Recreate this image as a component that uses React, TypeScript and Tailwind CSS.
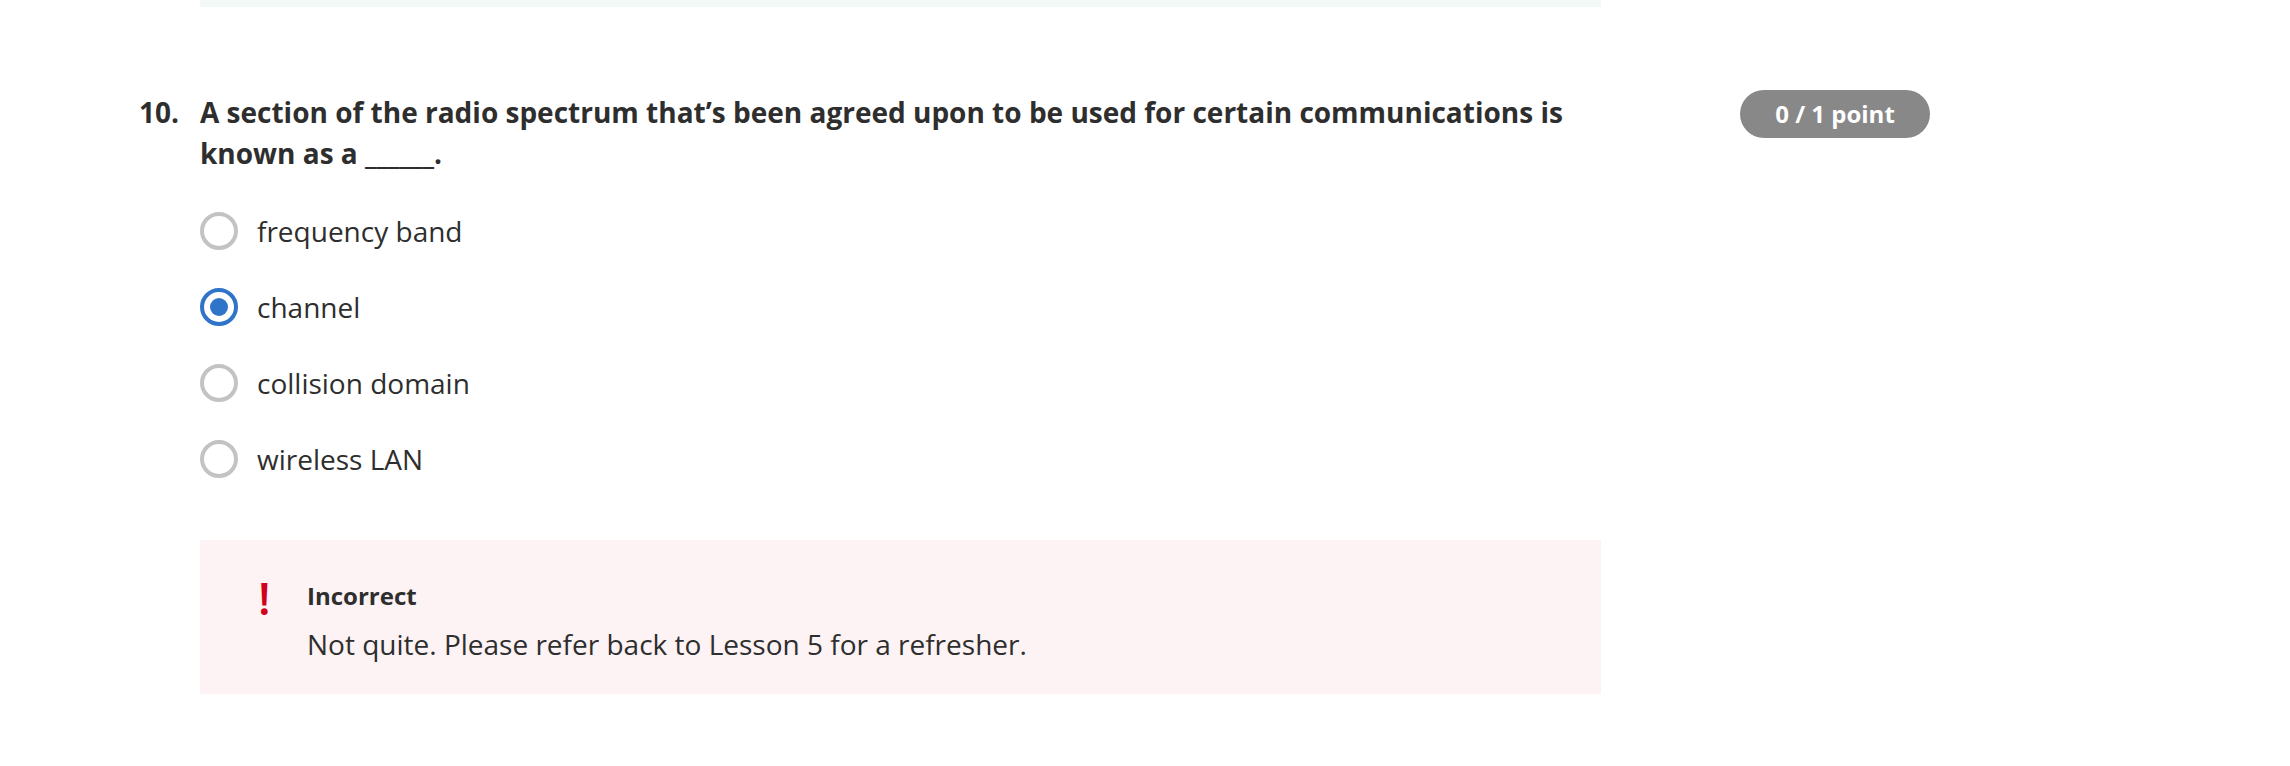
const OPTIONS = ["frequency band", "channel", "collision domain", "wireless LAN"];
const SELECTED = 1;

function Radio({ checked }: { checked: boolean }) {
  return (
    <span
      className={
        checked
          ? "grid h-[38px] w-[38px] shrink-0 place-items-center rounded-full border-[4px] border-[#2f74c9]"
          : "h-[38px] w-[38px] shrink-0 rounded-full border-[4px] border-[#c3c3c3]"
      }
    >
      {checked && <span className="h-[18px] w-[18px] rounded-full bg-[#2f74c9]" />}
    </span>
  );
}

export default function App() {
  return (
    <div className="min-h-[766px] w-[2290px] bg-white font-['Open_Sans',sans-serif] text-[#2e2e2e]">
      <div className="ml-[200px] h-[7px] w-[1401px] bg-[#f3f9f7]" />

      <div className="mt-[85px] flex">
        <div className="w-[200px] shrink-0 pl-[139px] text-[28px] font-bold leading-[41px]">10.</div>

        <div className="w-[1401px] shrink-0">
          <p className="pr-[20px] text-[28px] font-bold leading-[41px]">
            A section of the radio spectrum that’s been agreed upon to be used for certain communications is
            known as a ______.
          </p>

          <ul className="mt-[38px] flex flex-col gap-[38px]">
            {OPTIONS.map((label, i) => (
              <li key={label} className="flex h-[38px] items-center gap-[19px]">
                <Radio checked={i === SELECTED} />
                <span className="text-[28px] leading-[38px]">{label}</span>
              </li>
            ))}
          </ul>

          <div className="mt-[62px] flex h-[154px] bg-[#fdf2f4] pl-[58px] pt-[40px]">
            <span className="-mt-[8px] w-[49px] shrink-0 text-[46px] font-semibold leading-[50px] text-[#d0021b]">!</span>
            <div>
              <p className="text-[24px] font-bold leading-[32px]">Incorrect</p>
              <p className="mt-[12px] text-[28px] leading-[40px]">
                Not quite. Please refer back to Lesson 5 for a refresher.
              </p>
            </div>
          </div>
        </div>

        <div className="ml-[139px] -mt-[2px] shrink-0">
          <span className="flex h-[48px] w-[190px] items-center justify-center rounded-full bg-[#888888] text-[24px] font-bold text-white">
            0 / 1 point
          </span>
        </div>
      </div>
    </div>
  );
}
